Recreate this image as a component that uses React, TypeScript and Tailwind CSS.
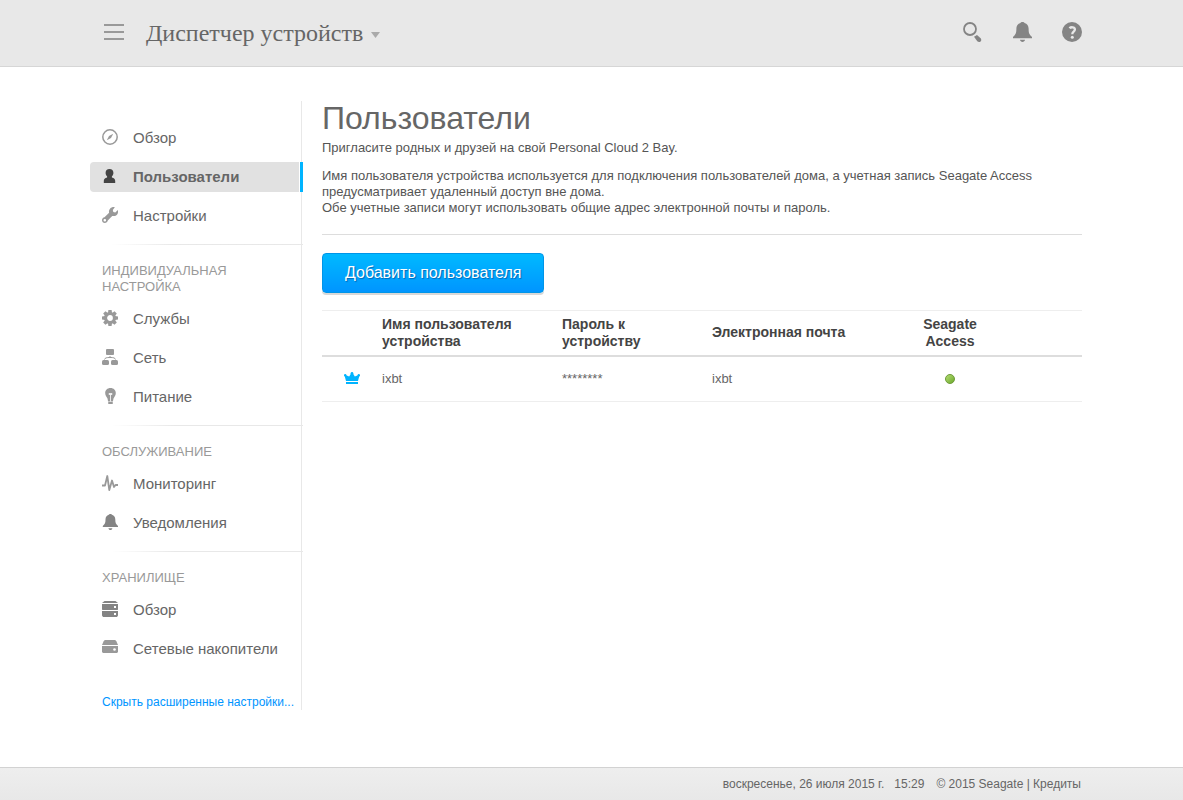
import clsx from 'clsx';
import React from 'react';

interface NavItem {
    label: string;
    icon: React.ReactNode;
    active?: boolean;
}

interface NavGroup {
    title?: string;
    items: NavItem[];
}

const Icon = ({ children, className }: { children: React.ReactNode; className?: string }) => (
    <svg viewBox="0 0 16 16" className={clsx('mb-0.5 h-4 w-4 shrink-0', className)} fill="currentColor" aria-hidden="true">
        {children}
    </svg>
);

const BellIcon = ({ className }: { className?: string }) => (
    <svg viewBox="0 0 20 20" className={className} fill="currentColor" aria-hidden="true">
        <path d="M10.500 0c1 0 1.800.4 2 1 2.700.7 4.100 2.900 4.100 5.600 0 4.300.6 6 3.400 8.400v1.200H1V15c2.800-2.400 3.400-4.100 3.400-8.400 0-2.700 1.400-4.900 4.100-5.600.2-.6 1-1 2-1z" />
        <path d="M8 17.700h5c-.3 1.400-1.200 2.200-2.500 2.200s-2.200-.8-2.500-2.200z" />
    </svg>
);

const compass = (
    <Icon className="text-[#999999]">
        <circle cx="8" cy="8" r="7.200" fill="none" stroke="currentColor" strokeWidth="1.500" />
        <path d="M11.200 4.800 9 9 4.800 11.200 7 7z" />
    </Icon>
);

const person = (
    <Icon className="text-[#444444]">
        <path d="M7.500 1c2.500 0 3.900 1.500 3.900 3.700 0 1.700-.6 2.700-1.500 3.600v1.200c2.200.6 3.300 1.500 3.300 3.500v2H1.800v-2c0-2 1.100-2.900 3.300-3.500V8.300c-.9-.9-1.500-1.900-1.500-3.600C3.600 2.500 5 1 7.500 1z" />
    </Icon>
);

const wrench = (
    <Icon className="text-[#999999]">
        <path
            fillRule="evenodd"
            d="M12.800.2 10.800 3l.5 1.900 2 .5L15.800 3c.6 2.300 0 4.300-1.400 5.300-1.300.9-2.900 1-4.200.6l-4.400 4.600c-.3 1.500-1.500 2.500-3 2.500C1.200 16 0 14.800 0 13.200c0-1.700 1.100-2.800 2.500-3l4.600-4.400C6.700 4.300 7 2.900 8.200 1.600 9.400.3 11.200-.2 12.800.2zM2.800 11.900a1.300 1.300 0 1 0 0 2.600 1.300 1.300 0 0 0 0-2.600z"
        />
    </Icon>
);

const gear = (
    <Icon className="text-[#999999]">
        <circle cx="8" cy="8" r="4.400" fill="none" stroke="currentColor" strokeWidth="3" />
        {[0, 45, 90, 135, 180, 225, 270, 315].map((angle) => (
            <path key={angle} d="M6.400 0h3.200l.4 3H6z" transform={`rotate(${angle} 8 8)`} />
        ))}
    </Icon>
);

const network = (
    <Icon className="text-[#999999]">
        <rect x="4" y="0" width="8" height="6" rx="1" />
        <rect x="0" y="11" width="7" height="5" rx="1.500" />
        <rect x="9" y="11" width="7" height="5" rx="1.500" />
        <path d="M2.500 10.500c.5-1.700 2-2 5.500-2s5 .3 5.500 2M8 7v1.500" fill="none" stroke="currentColor" />
    </Icon>
);

const bulb = (
    <Icon className="text-[#999999]">
        <path d="M8.500 0c3.200 0 5.300 2.200 5.300 5 0 2.400-1.400 3.800-2.300 5.600l-.6 2.900H6.100l-.6-2.900C4.600 8.800 3.200 7.400 3.200 5c0-2.800 2.100-5 5.300-5z" />
        <rect x="6" y="14" width="5" height="2" rx="1" />
        <path d="M8.500 13.500V6.500M7 5.500h3v1H7z" fill="none" stroke="#ffffff" strokeWidth=".8" />
    </Icon>
);

const pulse = (
    <Icon className="text-[#999999]">
        <path d="M0 10.500h3L5.300 1l2 14L10 5.500l2 6.500 1.500-2H16" fill="none" stroke="currentColor" strokeWidth="1.800" strokeLinejoin="round" />
    </Icon>
);

const bell = <BellIcon className="mb-0.5 h-4 w-4 shrink-0 text-[#848484]" />;

const server = (
    <Icon className="text-[#848484]">
        <path d="M2.500 0h11L16 2H0z" />
        <path d="M0 3h16v5.500l-.5.500H.5L0 8.500zM0 10h16v4.500l-1 1.500H1l-1-1.500z" />
        <rect x="12" y="5" width="2" height="2" fill="#ffffff" />
        <rect x="12" y="12" width="2" height="2" fill="#ffffff" />
    </Icon>
);

const drive = (
    <Icon className="text-[#999999]">
        <path d="M3.500 0h9c1 0 1.500.6 2 1.600L16 5H0l1.500-3.400C2 .6 2.500 0 3.500 0z" />
        <path d="M0 6h16v6l-1 1H1l-1-1z" />
        <circle cx="12.500" cy="9.500" r="1.300" fill="#ffffff" />
    </Icon>
);

const groups: NavGroup[] = [
    {
        items: [
            { label: 'Обзор', icon: compass },
            { label: 'Пользователи', icon: person, active: true },
            { label: 'Настройки', icon: wrench },
        ],
    },
    {
        title: 'Индивидуальная настройка',
        items: [
            { label: 'Службы', icon: gear },
            { label: 'Сеть', icon: network },
            { label: 'Питание', icon: bulb },
        ],
    },
    {
        title: 'Обслуживание',
        items: [
            { label: 'Мониторинг', icon: pulse },
            { label: 'Уведомления', icon: bell },
        ],
    },
    {
        title: 'Хранилище',
        items: [
            { label: 'Обзор', icon: server },
            { label: 'Сетевые накопители', icon: drive },
        ],
    },
];

const users = [{ name: 'ixbt', password: '********', email: 'ixbt' }];

function Header() {
    return (
        <header className="border-b border-[#d6d6d6] bg-[#e8e8e8] text-[#848484]">
            <div className="mx-auto flex h-[66px] max-w-[1003px] items-center pr-[11px] pl-[14px]">
                <button type="button" aria-label="Меню" className="flex flex-col gap-[5px] pb-0.5">
                    <span className="h-0.5 w-5 bg-[#999999]" />
                    <span className="h-0.5 w-5 bg-[#999999]" />
                    <span className="h-0.5 w-5 bg-[#999999]" />
                </button>
                <button
                    type="button"
                    className="ml-[22px] flex items-center gap-2 font-['Liberation_Serif',serif] text-2xl text-[#666666]"
                >
                    Диспетчер устройств
                    <svg viewBox="0 0 9 6" className="mt-1 h-1.5 w-[9px] fill-[#aaaaaa]" aria-hidden="true">
                        <path d="M0 0h9L4.500 6z" />
                    </svg>
                </button>
                <div className="ml-auto flex items-center gap-[30px] pb-0.5">
                    <button type="button" aria-label="Поиск">
                        <svg viewBox="0 0 20 20" className="h-5 w-5" fill="currentColor" aria-hidden="true">
                            <circle cx="8" cy="7" r="6" fill="none" stroke="currentColor" strokeWidth="1.800" />
                            <path d="m12 14.800 3-1.800 3.400 3c1.500 1.400 1 4-1.200 4-.8 0-1.400-.2-1.900-.7z" />
                        </svg>
                    </button>
                    <button type="button" aria-label="Уведомления">
                        <BellIcon className="h-5 w-5" />
                    </button>
                    <button type="button" aria-label="Справка">
                        <svg viewBox="0 0 20 20" className="h-5 w-5" aria-hidden="true">
                            <circle cx="10" cy="10" r="10" fill="currentColor" />
                            <path d="M7.500 6.300C8.500 5 12.900 4.500 12.900 7.500c0 2.300-2.600 2-2.600 4.700" fill="none" stroke="#e8e8e8" strokeWidth="2.300" />
                            <circle cx="10.300" cy="15.300" r="1.500" fill="#e8e8e8" />
                        </svg>
                    </button>
                </div>
            </div>
        </header>
    );
}

function Sidebar() {
    return (
        <nav className="w-[213px] shrink-0 bg-[linear-gradient(#e8e8e8,#e8e8e8)] bg-[length:1px_100%] bg-[position:211px_0] bg-no-repeat pt-[22px]">
            {groups.map((group, index) => (
                <section key={index}>
                    {index > 0 && <div className="mt-[13px] mb-[18px] h-px bg-linear-to-r from-white from-10% to-[#e8e8e8] to-40%" />}
                    {group.title && (
                        <h2 className="mb-[9px] pr-12 pl-3 text-[13px] leading-4 text-[#999999] uppercase">{group.title}</h2>
                    )}
                    <ul className="flex flex-col gap-[9px]">
                        {group.items.map((item) => (
                            <li key={item.label}>
                                <a href="#" className="flex h-[30px] text-[15px]">
                                    <span
                                        className={clsx(
                                            'mr-px flex flex-1 items-center gap-[15px] rounded-l pl-3 whitespace-nowrap text-[#666666]',
                                            item.active && 'bg-[#e1e1e1] font-bold'
                                        )}
                                    >
                                        {item.icon}
                                        {item.label}
                                    </span>
                                    <span className={clsx('w-[3px]', item.active && 'bg-[#00b4ff]')} />
                                </a>
                            </li>
                        ))}
                    </ul>
                </section>
            ))}
            <a href="#" className="mt-[30px] block pl-3 text-xs leading-4 whitespace-nowrap text-[#0095ff]">
                Скрыть расширенные настройки...
            </a>
        </nav>
    );
}

function UsersTable() {
    return (
        <table className="mt-[17px] w-full table-fixed border-t border-[#eeeeee] text-left">
            <colgroup>
                <col className="w-[60px]" />
                <col className="w-[180px]" />
                <col className="w-[150px]" />
                <col className="w-[180px]" />
                <col className="w-[116px]" />
                <col />
            </colgroup>
            <thead>
                <tr className="h-[45px] border-b-2 border-[#dddddd] text-sm leading-[17px] text-[#444444]">
                    <th aria-label="Роль" />
                    <th className="pr-8">Имя пользователя устройства</th>
                    <th className="pr-12">Пароль к устройству</th>
                    <th>Электронная почта</th>
                    <th className="px-5 text-center">Seagate Access</th>
                    <th aria-label="Действия" />
                </tr>
            </thead>
            <tbody>
                {users.map((user) => (
                    <tr key={user.name} className="h-[46px] border-b border-[#eeeeee] text-[13px] leading-4 text-[#666666]">
                        <td>
                            <svg viewBox="0 0 16 12" className="mx-auto mb-0.5 h-3 w-4 fill-[#00b4ff]" aria-hidden="true">
                                <circle cx="8" cy="1.300" r="1.300" />
                                <circle cx="1.200" cy="3.200" r="1.200" />
                                <circle cx="14.800" cy="3.200" r="1.200" />
                                <path d="M.6 3.800 2 3.300l3.200 1.200L7 1.500h2l1.800 3L14 3.300l1.400.5L14 9H2z" />
                                <path d="M2 10h12v2H2z" />
                            </svg>
                        </td>
                        <td>{user.name}</td>
                        <td>{user.password}</td>
                        <td>{user.email}</td>
                        <td>
                            <span className="mx-auto block h-2.5 w-2.5 rounded-full border border-[#6f9c3c] bg-linear-to-br from-[#b4dc70] to-[#6ba92a]" />
                        </td>
                        <td />
                    </tr>
                ))}
            </tbody>
        </table>
    );
}

export default function App() {
    return (
        <div className="flex min-h-screen flex-col bg-white font-['Liberation_Sans',Arial,sans-serif] text-[#555555]">
            <Header />
            <div className="mx-auto flex w-full max-w-[1003px] flex-1 items-start pt-[34px] pr-[11px] pb-12">
                <Sidebar />
                <main className="ml-[19px] min-w-0 flex-1">
                    <h1 className="text-[32px] leading-[34px] text-[#666666]">Пользователи</h1>
                    <p className="mt-[5px] text-[13px] leading-4">Пригласите родных и друзей на свой Personal Cloud 2 Bay.</p>
                    <p className="mt-3 text-[13px] leading-4">
                        Имя пользователя устройства используется для подключения пользователей дома, а учетная запись Seagate Access
                        предусматривает удаленный доступ вне дома.
                        <br />
                        Обе учетные записи могут использовать общие адрес электронной почты и пароль.
                    </p>
                    <hr className="mt-[18px] border-[#dddddd]" />
                    <button
                        type="button"
                        className="mt-[18px] block h-10 rounded-sm border border-[#0095e8] bg-linear-to-b from-[#00b9ff] to-[#0095ff] px-[22px] text-base text-white shadow-[0_2px_0_#d8d8d8] text-shadow-[1px_1px_1px_#0069b4]"
                    >
                        Добавить пользователя
                    </button>
                    <UsersTable />
                </main>
            </div>
            <footer className="border-t border-[#d2d2d2] bg-linear-to-b from-[#eeeeee] to-[#e8e8e8] text-xs leading-8 text-[#666666]">
                <div className="mx-auto flex max-w-[1003px] justify-end pr-3">
                    <span className="mr-2.5">воскресенье, 26 июля 2015 г.</span>
                    <span className="mr-3">15:29</span>
                    <span>
                        © 2015 Seagate | <a href="#">Кредиты</a>
                    </span>
                </div>
            </footer>
        </div>
    );
}
